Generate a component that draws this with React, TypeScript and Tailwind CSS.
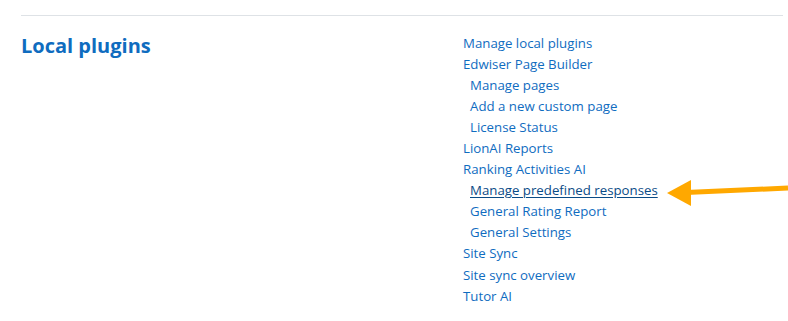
const LINKS: { label: string; indent?: boolean; active?: boolean }[] = [
  { label: 'Manage local plugins' },
  { label: 'Edwiser Page Builder' },
  { label: 'Manage pages', indent: true },
  { label: 'Add a new custom page', indent: true },
  { label: 'License Status', indent: true },
  { label: 'LionAI Reports' },
  { label: 'Ranking Activities AI' },
  { label: 'Manage predefined responses', indent: true, active: true },
  { label: 'General Rating Report', indent: true },
  { label: 'General Settings', indent: true },
  { label: 'Site Sync' },
  { label: 'Site sync overview' },
  { label: 'Tutor AI' },
];

function Arrow() {
  return (
    <svg
      className="absolute left-[664px] top-[178px]"
      width="124"
      height="30"
      viewBox="0 0 124 30"
      aria-hidden
    >
      <line x1="22" y1="14.5" x2="124" y2="10" stroke="#ffa800" strokeWidth="5" />
      <polygon points="3,15 27,2 27,28" fill="#ffa800" />
    </svg>
  );
}

export default function App() {
  return (
    <div
      className="relative h-[321px] w-[788px] overflow-hidden bg-white"
      style={{ fontFamily: '"Open Sans", "Noto Sans", sans-serif' }}
    >
      <div className="pl-[21px] pr-[5px] pt-[15px]">
        <hr className="border-t border-[#dee2e6]" />
        <div className="flex pt-[16px]">
          <h3 className="w-[442px] shrink-0 text-[20px] font-bold leading-[28px] text-[#0f6cbf]">
            Local plugins
          </h3>
          <ul className="mt-[0.5px]">
            {LINKS.map((l) => (
              <li
                key={l.label}
                className={`text-[13.25px] leading-[21.1px] ${l.indent ? 'pl-[7px]' : ''}`}
              >
                <a
                  href="#"
                  className={
                    l.active
                      ? 'text-[#0a4b86] underline underline-offset-2'
                      : 'text-[#0f6cbf]'
                  }
                >
                  {l.label}
                </a>
              </li>
            ))}
          </ul>
        </div>
      </div>
      <Arrow />
    </div>
  );
}
